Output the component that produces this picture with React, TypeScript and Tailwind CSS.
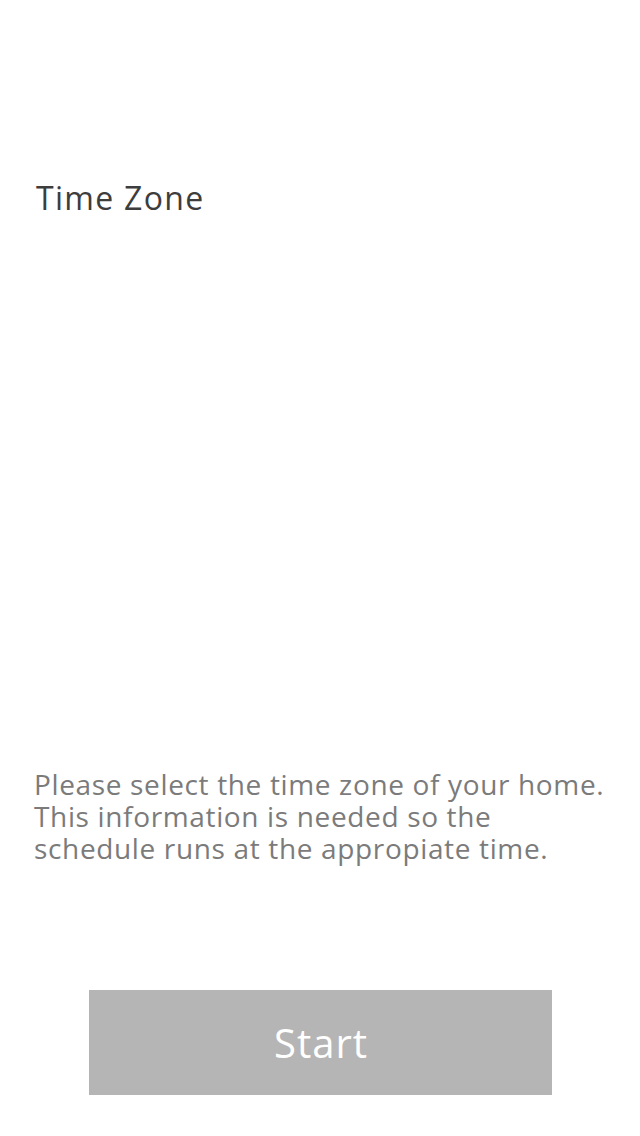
import React from 'react';

const font = { fontFamily: '"Open Sans", "Liberation Sans", sans-serif' };

export default function App() {
  return (
    <main className="w-[640px] h-[1136px] bg-white flex flex-col" style={font}>
      <h1 className="pt-[176px] pl-[36px] text-[32px] leading-[44px] tracking-[1.3px] text-[#3d3d3d] font-normal">Time Zone</h1>

      <div className="mt-[548px] pl-[34px] pr-[10px] text-[28px] leading-[32px] tracking-[0.65px] text-[#7b7b7b]">
        <div>Please select the time zone of your home.</div>
        <div>This information is needed so the</div>
        <div>schedule runs at the appropiate time.</div>
      </div>

      <div className="mt-[126px] flex justify-center">
        <button className="w-[463px] h-[105px] bg-[#b5b5b5] text-white text-[40px] tracking-[1px] pl-[2px]">Start</button>
      </div>
    </main>
  );
}
